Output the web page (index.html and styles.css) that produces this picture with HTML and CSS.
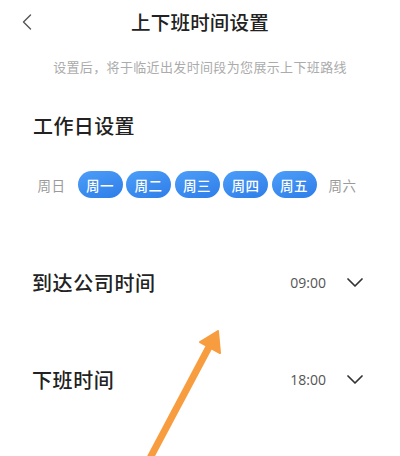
FILE: index.html
```html
<!DOCTYPE html>
<html lang="zh">
<head>
<meta charset="utf-8">
<link rel="stylesheet" href="styles.css">
</head>
<body>
<div class="page">
  <header class="topbar">
    <span class="back">
      <svg width="10" height="16" viewBox="0 0 10 16"><path d="M8.5 1 L1.5 8 L8.5 15" fill="none" stroke="#555" stroke-width="1.4" stroke-linecap="round" stroke-linejoin="round"/></svg>
    </span>
    <h1 class="title">上下班时间设置</h1>
    <span class="spacer"></span>
  </header>
  <p class="hint">设置后，将于临近出发时间段为您展示上下班路线</p>
  <h2 class="section-title">工作日设置</h2>
  <div class="days">
    <span class="day">周日</span>
    <span class="day on">周一</span>
    <span class="day on">周二</span>
    <span class="day on">周三</span>
    <span class="day on">周四</span>
    <span class="day on">周五</span>
    <span class="day">周六</span>
  </div>
  <div class="row row-first">
    <span class="label">到达公司时间</span>
    <span class="time">09:00</span>
    <svg class="chev" width="16" height="9" viewBox="0 0 16 9"><path d="M1 1 L8 8 L15 1" fill="none" stroke="#333" stroke-width="1.7" stroke-linecap="round" stroke-linejoin="round"/></svg>
  </div>
  <div class="row row-second">
    <span class="label">下班时间</span>
    <span class="time">18:00</span>
    <svg class="chev" width="16" height="9" viewBox="0 0 16 9"><path d="M1 1 L8 8 L15 1" fill="none" stroke="#333" stroke-width="1.7" stroke-linecap="round" stroke-linejoin="round"/></svg>
  </div>
  <svg class="arrow" width="400" height="456" viewBox="0 0 400 456">
    <line x1="149" y1="460" x2="209" y2="347" stroke="#f89d3f" stroke-width="7" stroke-linecap="butt"/>
    <polygon points="218,331 200,342 220,353" fill="#f89d3f" stroke="#f89d3f" stroke-width="2" stroke-linejoin="round"/>
  </svg>
</div>
</body>
</html>
```
FILE: styles.css
```css
html, body {
  margin: 0;
  padding: 0;
  background: #ffffff;
}
body {
  font-family: "Noto Sans CJK SC", "Noto Sans", sans-serif;
  color: #222;
}
.page {
  position: relative;
  width: 400px;
  height: 456px;
  overflow: hidden;
}
.topbar {
  display: grid;
  grid-template-columns: 48px 1fr 48px;
  align-items: center;
  height: 43px;
}
.back {
  display: flex;
  align-items: center;
  padding-left: 22px;
  padding-top: 1px;
}
.title {
  margin: 0;
  font-size: 19.5px;
  font-weight: 500;
  text-align: center;
  letter-spacing: 0.2px;
  color: #222;
  line-height: 43px;
}
.hint {
  margin: 14px 0 0;
  font-size: 13px;
  line-height: 20px;
  letter-spacing: 0.35px;
  text-align: center;
  color: #ababab;
}
.section-title {
  margin: 35px 0 0 33px;
  font-size: 20px;
  font-weight: 500;
  line-height: 28px;
  letter-spacing: 0.4px;
  color: #222;
}
.days {
  display: flex;
  gap: 3.5px;
  margin: 31px 0 0 29px;
}
.day {
  width: 45px;
  height: 27px;
  border-radius: 14px;
  display: flex;
  align-items: center;
  justify-content: center;
  font-size: 13.5px;
  color: #9a9a9a;
  letter-spacing: 0.5px;
}
.day.on {
  background: linear-gradient(160deg, #4d9ef8 0%, #2d7de9 100%);
  color: #fff;
  font-weight: 500;
}
.row {
  display: flex;
  align-items: center;
  height: 50px;
  padding: 0 37px 0 32px;
}
.row-first {
  margin-top: 59px;
}
.row-second {
  margin-top: 47px;
}
.label {
  flex: 1;
  font-size: 20px;
  font-weight: 500;
  letter-spacing: 0.6px;
  color: #222;
}
.time {
  font-family: "Open Sans", "Liberation Sans", sans-serif;
  font-size: 14px;
  color: #555;
  margin-right: 21px;
}
.chev {
  display: block;
}
.arrow {
  position: absolute;
  left: 0;
  top: 0;
  pointer-events: none;
}
```
